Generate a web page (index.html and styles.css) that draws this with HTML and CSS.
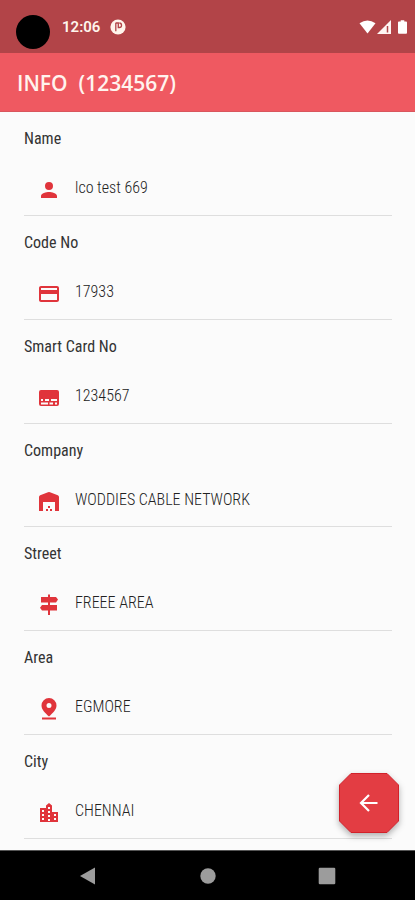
FILE: index.html
```html
<!DOCTYPE html>
<html lang="en">
<head>
<meta charset="utf-8">
<meta name="viewport" content="width=device-width, initial-scale=1">
<title>Info</title>
<link rel="stylesheet" href="styles.css">
</head>
<body>
<div class="screen">
  <div class="status">
    <span class="camera"></span>
    <span class="time">12:06</span>
    <svg class="notice" viewBox="0 0 16 16" aria-hidden="true"><circle cx="8" cy="8" r="7.600" fill="#fff5ec"/><path d="M5.800 3.800v8.500M5.800 4h2.500v4.500h1a2.200 2.200 0 0 0 0-4.500" fill="none" stroke="#b24448" stroke-width="1.300"/></svg>
    <span class="signals">
      <svg width="17" height="14" viewBox="0 0 17 14" aria-hidden="true"><path d="M.5 3.2Q8.5-2.4 16.5 3.2L8.500 13.500z" fill="#fff"/></svg>
      <svg width="14" height="14" viewBox="0 0 14 14" aria-hidden="true"><path d="M0 14L14 0v14z" fill="#fff5f3"/><path d="M10.500 6v6.500" stroke="#b24448" stroke-width="1.500"/></svg>
      <svg class="battery" width="9" height="14" viewBox="0 0 10 15" aria-hidden="true"><path d="M3 0h4v1.500h2q1 0 1 1V14q0 1-1 1H1q-1 0-1-1V2.500q0-1 1-1h2z" fill="#fff"/></svg>
    </span>
  </div>
  <header class="appbar"><h1>INFO&nbsp; (1234567)</h1></header>
  <main class="content">
    <dl class="list">
      <div class="row"><dt>Name</dt><dd><svg viewBox="0 0 24 24" aria-hidden="true"><path d="M12 12a4 4 0 1 0 0-8 4 4 0 0 0 0 8zm0 2c-2.700 0-8 1.300-8 4v2h16v-2c0-2.700-5.300-4-8-4z"/></svg><span>lco test 669</span></dd></div>
      <div class="row"><dt>Code No</dt><dd><svg viewBox="0 0 24 24" aria-hidden="true"><path d="M20 4H4c-1.100 0-2 .9-2 2v12c0 1.100.9 2 2 2h16c1.100 0 2-.9 2-2V6c0-1.100-.9-2-2-2zm0 14H4v-6h16v6zm0-10H4V6h16v2z"/></svg><span>17933</span></dd></div>
      <div class="row"><dt>Smart Card No</dt><dd><svg viewBox="0 0 24 24" aria-hidden="true"><path fill-rule="evenodd" d="M4 4h16q2 0 2 2v12q0 2-2 2H4q-2 0-2-2V6q0-2 2-2zM4 13v2h2v-2zM8 13v2h4v-2zM14 13v2h6v-2zM4 16.500v2h7v-2zM12.500 16.500v2H16v-2zM18 16.500v2h2v-2z"/></svg><span>1234567</span></dd></div>
      <div class="row"><dt>Company</dt><dd><svg viewBox="0 0 24 24" aria-hidden="true"><path d="M2 21V7q0-1.300 1.200-1.800L11 2.300q1-.4 2 0l7.800 2.900Q22 5.700 22 7v14h-4v-9H6v9z"/><path d="M9 19h2v2H9zM11 16h2v2h-2zM13 19h2v2h-2z"/></svg><span>WODDIES CABLE NETWORK</span></dd></div>
      <div class="row"><dt>Street</dt><dd><svg viewBox="0 0 24 24" aria-hidden="true"><path d="M11 1.500h2V4h6l2 2.500L19 9.500h-6V12h7v5.500h-7v4.500h-2v-4.500H5l-2-2.700L5 12h6V9.500H4V4h7z"/></svg><span>FREEE AREA</span></dd></div>
      <div class="row"><dt>Area</dt><dd><svg viewBox="0 0 24 24" aria-hidden="true"><path fill-rule="evenodd" d="M12 1a7.500 7.500 0 0 1 7.500 7.500c0 4-3.500 7.500-7.500 11-4-3.500-7.500-7-7.500-11A7.500 7.500 0 0 1 12 1zm0 5a2.500 2.500 0 1 0 0 5 2.500 2.500 0 0 0 0-5zM5 20.500h14v2H5z"/></svg><span>EGMORE</span></dd></div>
      <div class="row"><dt>City</dt><dd><svg viewBox="0 0 24 24" aria-hidden="true"><path fill-rule="evenodd" d="M9 7V4.500L12 2l3 2.500V11h6v10H3V7zM5 9v2h2V9zM5 13v2h2v-2zM5 17v2h2v-2zM11 6v2h2V6zM11 10v2h2v-2zM11 14v2h2v-2zM11 18v2h2v-2zM17 13v2h2v-2zM17 17v2h2v-2z"/></svg><span>CHENNAI</span></dd></div>
    </dl>
    <button class="back" type="button" aria-label="Back">
      <svg viewBox="0 0 60 60" aria-hidden="true"><path d="M12 .5h36L59.500 12v36L48 59.500H12L.5 48V12z" fill="#e33d43" stroke="#d2212a"/><path d="M38.500 30H22.500M30 22l-8 8 8 8" fill="none" stroke="#fff" stroke-width="2.200"/></svg>
    </button>
  </main>
  <nav class="navbar" aria-label="System">
    <button type="button" aria-label="Back"><svg viewBox="0 0 18 18"><path d="M0 9L15 .5v17z"/></svg></button>
    <button type="button" aria-label="Home"><svg viewBox="0 0 18 18"><circle cx="9" cy="9" r="7.700"/></svg></button>
    <button type="button" aria-label="Recents"><svg viewBox="0 0 18 18"><rect x=".7" y=".7" width="16.600" height="16.600" rx="1.200"/></svg></button>
  </nav>
</div>
</body>
</html>
```
FILE: styles.css
```css
* { box-sizing: border-box; }
body { margin: 0; font-family: "Ubuntu Condensed", "Roboto Condensed", "Liberation Sans Narrow", sans-serif; }
svg { display: block; flex: none; }
button { border: 0; padding: 0; background: none; cursor: pointer; }
.screen { min-height: 100vh; display: flex; flex-direction: column; background: #fbfbfb; }
.status { height: 53px; background: #b24448; display: flex; align-items: center; padding: 1px 8px 0 16px; color: #fff5ec; }
.camera { width: 34px; height: 34px; border-radius: 50%; background: #000; margin-top: 10px; }
.time { margin-left: 12px; font: 600 15px/20px Roboto, sans-serif; }
.notice { width: 16px; height: 16px; margin-left: 10px; }
.signals { margin-left: auto; display: flex; align-items: center; gap: 1px; }
.battery { margin-left: 6px; }
.appbar { height: 59px; background: #ef5961; border-bottom: 1px solid #d9565d; display: flex; align-items: center; padding: 2px 17px 0; color: #fff3ee; }
h1 { margin: 0; font: 600 21px/28px "Open Sans", sans-serif; }
.content { flex: 1; display: flex; flex-direction: column; position: relative; }
.list { flex: 1; margin: 0; padding: 0 23px 11px 24px; display: grid; grid-auto-rows: 1fr; }
.row { border-bottom: 1px solid #dedede; padding-top: 17px; font-size: 16px; line-height: 20px; color: #333; }
dd { margin: 27px 0 0; padding-left: 13px; display: flex; align-items: center; gap: 14px; height: 24px; font-weight: 300; color: #222; }
dd svg { width: 24px; height: 24px; fill: #e0343b; margin-top: 4px; }
.back { position: absolute; right: 16px; bottom: 17px; width: 60px; height: 60px; filter: drop-shadow(0 3px 3px rgba(0,0,0,.3)); }
.navbar { height: 50px; background: #000; border-top: 1px solid #555; display: flex; justify-content: center; gap: 101px; align-items: center; }
.navbar svg { width: 18px; height: 18px; fill: #9c9c9c; }
```
